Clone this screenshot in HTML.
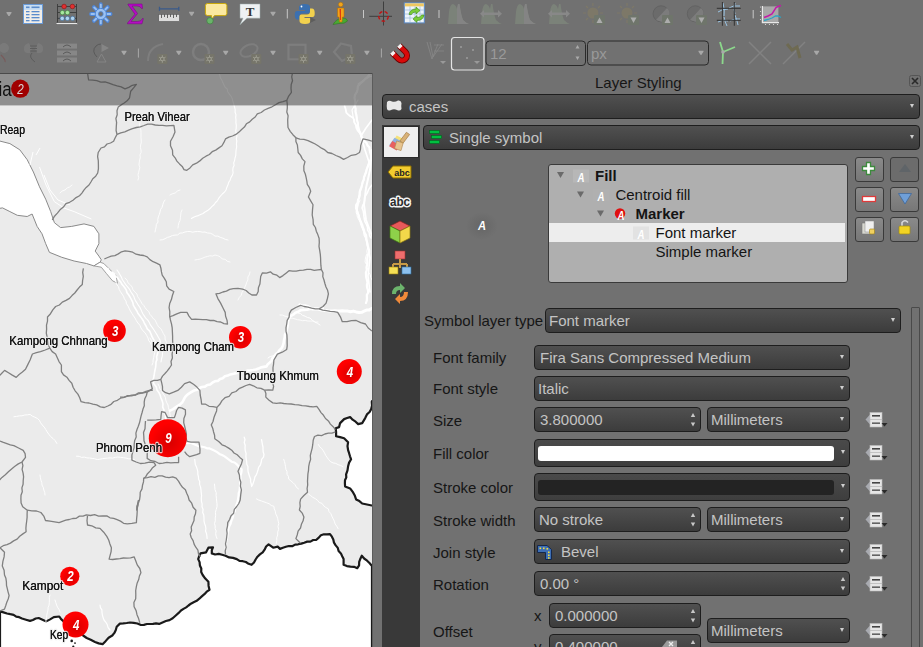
<!DOCTYPE html>
<html><head><meta charset="utf-8">
<style>
*{box-sizing:border-box;margin:0;padding:0}
html,body{width:923px;height:647px;overflow:hidden;background:#717171;font-family:"Liberation Sans",sans-serif;font-size:15px;}
.abs{position:absolute}
#map{position:absolute;left:0;top:73px;width:372px;height:574px;background:#e9e9e9;overflow:hidden}
#band{position:absolute;left:0;top:0;width:372px;height:32px;background:rgba(60,60,60,0.45)}
.dd{position:absolute;border:1px solid #1e1e1e;border-radius:4px;background:linear-gradient(#505050,#3c3c3c);color:#c4c4c4;font-size:15px;line-height:24px;padding-left:5px;white-space:nowrap;overflow:hidden}
.arr{position:absolute;right:5px;top:50%;margin-top:-3px;width:0;height:0;border-left:2.5px solid transparent;border-right:2.5px solid transparent;border-top:4.5px solid #cfcfcf}
.lbl{position:absolute;color:#161616;font-size:15px;white-space:nowrap;margin-top:-1px}
.btn{position:absolute;border:1px solid #3a3a3a;border-radius:3px;background:linear-gradient(#8a8a8a,#777)}
</style></head><body>

<!-- toolbar -->
<div id="tb" class="abs" style="left:0;top:0;width:923px;height:73px;background:#717171"><svg class="abs" style="left:0;top:0" width="923" height="73" viewBox="0 0 923 73">
<defs>
<g id="tarr"><path d="M-2.5,-2 L2.5,-2 L2.5,-1 L0.8,1.5 L0.8,2 L-0.8,2 L-0.8,1.5 L-2.5,-1 Z" fill="#a8a8a8"/></g>
<g id="badge"><rect x="-5" y="-5" width="10" height="10" rx="1" fill="#76756a"/><g stroke="#b4b4a8" stroke-width="0.6"><path d="M0,-3.8 L0,3.8 M-3.3,-1.9 L3.3,1.9 M-3.3,1.9 L3.3,-1.9"/></g><circle r="1.8" fill="#76756a" stroke="#b4b4a8" stroke-width="0.6"/></g>
</defs>
<!-- row 1 -->
<use href="#tarr" x="9" y="14"/>
<!-- table -->
<rect x="23.5" y="4.5" width="19" height="19" fill="#f2eee8" stroke="#6a9ad6" stroke-width="1"/>
<rect x="24" y="5" width="18" height="5" fill="#c8def3"/>
<g fill="#5b8ccc"><rect x="26" y="6.5" width="3.5" height="1.6"/><rect x="31.5" y="6.5" width="8" height="1.6"/>
<rect x="26" y="11" width="3.5" height="1.3"/><rect x="31.5" y="11" width="8" height="1.3"/>
<rect x="26" y="14" width="3.5" height="1.3"/><rect x="31.5" y="14" width="8" height="1.3"/>
<rect x="26" y="17" width="3.5" height="1.3"/><rect x="31.5" y="17" width="8" height="1.3"/>
<rect x="26" y="20" width="3.5" height="1.3"/><rect x="31.5" y="20" width="8" height="1.3"/></g>
<!-- abacus -->
<g stroke="#3a3a3a" stroke-width="0.9"><path d="M57.5,4 L57.5,23 M76.5,4 L76.5,23 M57.5,6.5 L76.5,6.5 M57.5,12.5 L76.5,12.5 M57.5,18.4 L76.5,18.4"/></g>
<rect x="56.5" y="22.8" width="21" height="1.6" fill="#e8e8e8" stroke="#444" stroke-width="0.4"/>
<g stroke="#8a1010" stroke-width="0.6" fill="#e03030"><circle cx="64.1" cy="6.5" r="2.3"/><circle cx="72.4" cy="6.5" r="2.3"/></g>
<g stroke="#3a8a3a" stroke-width="0.6" fill="#a8e6a0"><circle cx="62.4" cy="12.6" r="2.2"/><circle cx="67.4" cy="12.6" r="2.2"/></g>
<g stroke="#3a6a9a" stroke-width="0.6" fill="#b0d4f0"><circle cx="62.2" cy="18.4" r="2.2"/><circle cx="67.4" cy="18.4" r="2.2"/><circle cx="72.6" cy="18.4" r="2.2"/></g>
<!-- gear -->
<g stroke="#4f86d6" stroke-width="3.8" stroke-linecap="round"><path d="M100.8,4.2 L100.8,23.8 M91,14 L110.6,14 M93.9,7.1 L107.7,20.9 M93.9,20.9 L107.7,7.1"/></g>
<g stroke="#9cc2f2" stroke-width="1.9" stroke-linecap="round"><path d="M100.8,4.6 L100.8,23.4 M91.4,14 L110.2,14 M94.2,7.4 L107.4,20.6 M94.2,20.6 L107.4,7.4"/></g>
<circle cx="100.8" cy="14" r="5.6" fill="#9cc2f2" stroke="#4f86d6" stroke-width="1"/>
<circle cx="100.8" cy="14" r="2.4" fill="#717171" stroke="#4f86d6" stroke-width="0.8"/>
<!-- sigma -->
<path d="M128,4 L142,4 L142.5,8.5 L141.5,8.5 Q140.5,6 137,6 L132,6 L137.5,13.5 L131,21.5 L137.5,21.5 Q141.5,21.5 142.5,18.5 L143.3,18.5 L142,23.8 L127.5,23.8 L127.5,23 L135,14.2 L128,4.8 Z" fill="#b40cc4" stroke="#7a0080" stroke-width="0.5"/>
<!-- ruler -->
<path d="M159.5,8.8 L178.8,8.8 M159.5,6.8 L159.5,10.8 M178.8,6.8 L178.8,10.8" stroke="#3a5a8a" stroke-width="1.3"/>
<rect x="158.7" y="14.3" width="20.8" height="7.2" fill="#dcdcdc" stroke="#555" stroke-width="0.6"/>
<path d="M161.5,14.3 L161.5,18 M164.5,14.3 L164.5,17 M167.5,14.3 L167.5,18 M170.5,14.3 L170.5,17 M173.5,14.3 L173.5,18 M176.5,14.3 L176.5,17" stroke="#444" stroke-width="0.8"/>
<use href="#tarr" x="191.6" y="13.7"/>
<!-- speech bubble -->
<path d="M207.5,3.5 L224.8,3.5 Q226.9,3.5 226.9,5.6 L226.9,13.5 Q226.9,15.6 224.8,15.6 L214.5,15.6 L211,20 L211.5,15.6 L207.5,15.6 Q205.4,15.6 205.4,13.5 L205.4,5.6 Q205.4,3.5 207.5,3.5 Z" fill="#fbe9a0" stroke="#c9a80a" stroke-width="1"/>
<circle cx="210" cy="20.8" r="3.2" fill="#6ab46a" stroke="#3a7a3a" stroke-width="0.6"/>
<!-- text annotation -->
<path d="M240,4 L260,4 L260,18.2 L247,18.2 L240,24.7 L243,18.2 L240,18.2 Z" fill="#eef1f3" stroke="#9aa" stroke-width="0.5"/>
<text x="250" y="15.8" font-family="Liberation Serif" font-size="13" font-weight="bold" fill="#333" text-anchor="middle">T</text>
<use href="#tarr" x="273" y="13.7"/>
<path d="M287.3,9 L287.3,18.5" stroke="#c8c8c8" stroke-width="1"/>
<!-- python -->
<path d="M304.5,4 Q299,4 299,7.5 L299,10 L305,10 L305,11 L297,11 Q294.5,11 294.8,15.5 Q295,19.5 297.5,19.5 L299.5,19.5 L299.5,16.5 Q299.5,13.5 302.5,13.5 L308,13.5 Q310,13.5 310,11.5 L310,7 Q310,4 304.5,4 Z" fill="#3b70b0"/>
<circle cx="301.5" cy="6.5" r="0.9" fill="#fff"/>
<path d="M305,24 Q310.5,24 310.5,20.5 L310.5,18 L304.5,18 L304.5,17 L312.5,17 Q315,17 314.7,12.5 Q314.5,8.5 312,8.5 L310,8.5 L310,11.5 Q310,14.5 307,14.5 L301.5,14.5 Q299.5,14.5 299.5,16.5 L299.5,21 Q299.5,24 305,24 Z" fill="#f2d14e"/>
<path d="M310,17 L316,20 L310,23 Z" fill="#555" opacity="0.7"/>
<!-- person -->
<path d="M333,24.5 Q336,19 342,18 Q347,18 347.5,21 Q345,24 339,23.5 Z" fill="#4aa832" stroke="#2d6e1c" stroke-width="0.5"/>
<circle cx="340.7" cy="4.5" r="2.3" fill="#f2a41a" stroke="#a86a0a" stroke-width="0.5"/>
<path d="M337.5,8 L344,8 L344,17 L342.5,17 L342,22 L339.5,22 L339,17 L337.5,17 Z" fill="#f2a41a" stroke="#b06a00" stroke-width="0.5"/>
<path d="M339.5,9 L341,9 L341,20 L340,20 Z" fill="#e03a10"/>
<path d="M363.5,10 L363.5,18" stroke="#c8c8c8" stroke-width="1"/>
<!-- crosshair -->
<path d="M383.5,1.5 L383.5,25.5 M369.3,16.3 L392,16.3" stroke="#3e3e3e" stroke-width="1"/>
<circle cx="383.5" cy="16.3" r="4.8" fill="none" stroke="#c41010" stroke-width="1.4" stroke-dasharray="3.4,2.4"/>
<!-- table refresh -->
<rect x="404.3" y="2.9" width="20" height="20" fill="#eef4fa" stroke="#5a8ac8" stroke-width="1"/>
<rect x="404.8" y="3.4" width="19" height="3" fill="#f0c860"/>
<path d="M404.8,10 L423.8,10 M404.8,14 L423.8,14 M404.8,18 L423.8,18 M410,6.4 L410,22.4 M415,6.4 L415,22.4 M420,6.4 L420,22.4" stroke="#9ab8d8" stroke-width="0.7"/>
<path d="M409,14.5 Q410,9 416,9 L416,7 L420,10.5 L416,14 L416,12 Q412,12 411.5,14.5 Z" fill="#7acc3a" stroke="#3a8a10" stroke-width="0.6"/>
<path d="M424,15 Q423,20.5 417,20.5 L417,22.5 L413,19 L417,15.5 L417,17.5 Q421,17.5 421.5,15 Z" fill="#7acc3a" stroke="#3a8a10" stroke-width="0.6"/>
<path d="M439,10 L439,18" stroke="#c8c8c8" stroke-width="1"/>
<!-- histograms (disabled) -->
<g opacity="0.42">
<path d="M448,24 L449,12 Q450,4 453,4 Q456,5 457,9 L458,4 L459.5,4 Q461,15 463,20 Q466,23 469,24 Z" fill="#8a9a84"/>
<path d="M457,9 L458,4 L459.5,4 Q461,15 463,20 Q466,23 469,24 L457,24 Z" fill="#a0a0a0"/>
<path d="M481,24 L482,12 Q483,4 486,4 Q489,5 490,9 L491,4 L492.5,4 Q494,15 496,20 Q499,23 502,24 Z" fill="#8a9a84"/>
<path d="M480,13.8 L484,10 L484,12.5 L498,12.5 L498,10 L502,13.8 L498,17.5 L498,15 L484,15 L484,17.5 Z" fill="#a8a8a8"/>
<path d="M515,24 L516,12 Q517,4 520,4 Q523,5 524,9 L525,4 L526.5,4 Q528,15 530,20 Q533,23 536,24 Z" fill="#8a9a84"/>
<path d="M524,9 L525,4 L526.5,4 Q528,15 530,20 Q533,23 536,24 L524,24 Z" fill="#a0a0a0"/>
<path d="M549,24 L550,12 Q551,4 554,4 Q557,5 558,9 L559,4 L560.5,4 Q562,15 564,20 Q567,23 570,24 Z" fill="#8a9a84"/>
<path d="M548,13.8 L552,10 L552,12.5 L566,12.5 L566,10 L570,13.8 L566,17.5 L566,15 L552,15 L552,17.5 Z" fill="#a8a8a8"/>
</g>
<!-- sun / contrast disabled -->
<g opacity="0.5">
<circle cx="592.9" cy="13" r="5.5" fill="#8a8060"/>
<path d="M592.9,3 L592.9,6 M592.9,20 L592.9,23 M583,13 L586,13 M600,13 L603,13 M586,6 L588,8 M600,6 L598,8 M586,20 L588,18" stroke="#8a8060" stroke-width="1.2"/>
<rect x="594" y="15" width="11" height="10" rx="1" fill="#6e7a66"/>
<path d="M596.5,23 L599.5,17.5 L602.5,23 Z" fill="#e8e8e8"/>
<circle cx="627" cy="13" r="5.5" fill="#8a8060"/>
<path d="M627,3 L627,6 M627,20 L627,23 M617,13 L620,13 M634,13 L637,13 M620,6 L622,8 M634,6 L632,8 M620,20 L622,18" stroke="#8a8060" stroke-width="1.2"/>
<rect x="628" y="15" width="11" height="10" rx="1" fill="#6e7a66"/>
<path d="M630.5,17.5 L636.5,17.5 L633.5,23 Z" fill="#e8e8e8"/>
<circle cx="661.1" cy="13.8" r="8" fill="#666" stroke="#555" stroke-width="1"/>
<path d="M656,20 L667,8 A8,8 0 0,1 661.1,21.8 Z" fill="#888"/>
<rect x="662" y="15" width="11" height="10" rx="1" fill="#6e7a66"/>
<path d="M664.5,23 L667.5,17.5 L670.5,23 Z" fill="#e8e8e8"/>
<circle cx="695.3" cy="13.8" r="8" fill="#666" stroke="#555" stroke-width="1"/>
<path d="M690,20 L701,8 A8,8 0 0,1 695.3,21.8 Z" fill="#888"/>
<rect x="696" y="15" width="11" height="10" rx="1" fill="#6e7a66"/>
<path d="M698.5,17.5 L704.5,17.5 L701.5,23 Z" fill="#e8e8e8"/>
</g>
<!-- grid -->
<path d="M718,12 Q722,9 728,9 M729,8 Q733,5 740,6 M718,22 Q722,19 728,21 M730,21 Q735,18 740,19 M723,3 Q725,10 724,16 M724,17 Q725,22 727,26 M735,3 Q733,10 735,14 M735,15 Q737,20 738,25" stroke="#9ac4e4" stroke-width="1" fill="none"/>
<path d="M722.4,2 L722.4,25.8 M734.3,2 L734.3,25.8 M716.8,8.3 L740.8,8.3 M716.8,20.3 L740.8,20.3" stroke="#333" stroke-width="1"/>
<path d="M753.2,10 L753.2,18.4" stroke="#c8c8c8" stroke-width="1"/>
<!-- chart -->
<rect x="762.4" y="6.4" width="16" height="16.2" fill="#a8a8a8"/>
<path d="M762.4,6 L762.4,22.6 L779,22.6" stroke="#e8e8e8" stroke-width="1.2" fill="none"/>
<g fill="#ddd"><circle cx="760.5" cy="7" r="0.6"/><circle cx="760.5" cy="11.5" r="0.6"/><circle cx="760.5" cy="15.5" r="0.6"/><circle cx="760.5" cy="19.5" r="0.6"/><circle cx="765.5" cy="24.5" r="0.6"/><circle cx="769.5" cy="24.5" r="0.6"/><circle cx="773.5" cy="24.5" r="0.6"/><circle cx="777.5" cy="24.5" r="0.6"/></g>
<path d="M764,17.5 L768,16 L772,14 L776,7.5 L778,6.5 L781,5.5" stroke="#c21aa8" stroke-width="1.5" fill="none"/>
<path d="M764,20.5 L768,19.5 L772,18 L775.5,16 L778,16 L781,17.5" stroke="#2aa4c4" stroke-width="1.3" fill="none"/>

<!-- row 2 (mostly disabled) -->
<g opacity="0.9">
<circle cx="4" cy="48" r="5" fill="#7c7c7c"/>
<path d="M1,55 Q6,60 5,62" stroke="#7a5a5a" stroke-width="1.2" fill="none"/>
<path d="M29,43 Q23,44 24,50 Q25,54 30,53 L32,49 Z" fill="#7b7b7b"/><path d="M38,43 Q44,44 43,50 Q42,54 37,53 L35,49 Z" fill="#7b7b7b"/>
<path d="M30,46 L37,46 M30,48.5 L37,48.5 M30,51 L37,51" stroke="#555" stroke-width="0.8"/>
<path d="M32,53 Q28,57 35,62" stroke="#555" stroke-width="0.8" fill="none"/>
<g fill="#8a8a8a"><rect x="57" y="43.6" width="20" height="5"/><rect x="57" y="50.5" width="20" height="5"/><rect x="57" y="57.5" width="20" height="5"/></g>
<path d="M63,47 Q67,43 71,47 M63,54 Q67,50 71,54 M63,61 Q67,57 71,61" stroke="#444" stroke-width="0.7" fill="none"/>
<path d="M97,57 Q91,51 96,46 Q98,44 101,44" stroke="#555" stroke-width="0.9" fill="none"/>
<path d="M101.5,44 L109,48 L101.5,52 Z" fill="#888"/>
<path d="M97,62 L101.5,54 L106,62 Z" fill="none" stroke="#888" stroke-width="1"/>
</g>
<use href="#tarr" x="124" y="52.7"/>
<path d="M138.4,48.5 L138.4,57.6" stroke="#a8a8a8" stroke-width="1"/>
<path d="M148,61 Q148,47 163,44" stroke="#7e7e7e" stroke-width="2" fill="none"/>
<use href="#badge" x="162.3" y="59"/>
<use href="#tarr" x="178.8" y="52.7"/>
<circle cx="201" cy="52" r="8" fill="none" stroke="#7e7e7e" stroke-width="2.5"/>
<use href="#badge" x="209.5" y="59"/>
<use href="#tarr" x="225.7" y="52.7"/>
<ellipse cx="249" cy="50.5" rx="9" ry="5.5" fill="none" stroke="#7e7e7e" stroke-width="2" transform="rotate(-25 249 50.5)"/>
<use href="#badge" x="256.3" y="59"/>
<use href="#tarr" x="273" y="52.7"/>
<rect x="288.5" y="44.8" width="17" height="14.5" fill="none" stroke="#7e7e7e" stroke-width="2.2"/>
<use href="#badge" x="303.5" y="59"/>
<use href="#tarr" x="319.7" y="52.7"/>
<path d="M341,43.5 L351,46 L352,56 L342,61 L334,52 Z" fill="none" stroke="#7e7e7e" stroke-width="2.2"/>
<use href="#badge" x="350.3" y="59"/>
<use href="#tarr" x="366.9" y="52.7"/>
<path d="M381.4,48.5 L381.4,57.5" stroke="#a8a8a8" stroke-width="1"/>
<!-- magnet -->
<g transform="translate(402,55.5) rotate(-45)">
<path d="M-5,-9 L-5,0 A5,5 0 0,0 5,0 L5,-9" fill="none" stroke="#6a0000" stroke-width="6"/>
<path d="M-5,-8.5 L-5,0 A5,5 0 0,0 5,0 L5,-8.5" fill="none" stroke="#d80a0a" stroke-width="4.4"/>
<rect x="-7.2" y="-9.5" width="4.4" height="3.2" fill="#f2f2f2"/>
<rect x="2.8" y="-9.5" width="4.4" height="3.2" fill="#f2f2f2"/>
</g>
<!-- V icon disabled -->
<g stroke="#888" stroke-width="1" fill="none" opacity="0.8"><path d="M427,42 L432,59 L438,44 M430,42 L433,57 L442,44 M434,45 L444,45 M434,51 L444,51"/></g>
<path d="M440,61 L446,61 L443,64 Z" fill="#999"/>
<!-- selected button -->
<rect x="451.5" y="37.5" width="32.5" height="32.5" rx="3" fill="#717171" stroke="#e4e4e4" stroke-width="1.2"/>
<g stroke="#999" stroke-width="0.8"><path d="M460,46 L462,48 M462,46 L460,48 M472,49 L474,51 M474,49 L472,51 M466,57 L468,59 M468,57 L466,59"/></g>
<path d="M474,61 L480,61 L477,64 Z" fill="#999"/>
<!-- spinbox 12 -->
<rect x="486" y="41" width="99.5" height="24.5" rx="3.5" fill="#717171" stroke="#2a2a2a" stroke-width="1"/>
<text x="490" y="59" font-family="Liberation Sans" font-size="15" fill="#9a9a9a">12</text>
<path d="M575.5,48.5 L579.5,48.5 L577.5,45 Z M575.5,56.5 L579.5,56.5 L577.5,60 Z" fill="#aaa"/>
<!-- px combo -->
<rect x="587.5" y="41" width="121" height="24" rx="3.5" fill="#717171" stroke="#2a2a2a" stroke-width="1"/>
<text x="591" y="59" font-family="Liberation Sans" font-size="15" fill="#999">px</text>
<use href="#tarr" x="701" y="52.7"/>
<!-- Y green -->
<path d="M723,52 L720,42 M723,52 L735,47 M723,52 L722.5,64" stroke="#8cd88c" stroke-width="1.8"/>
<circle cx="723" cy="52" r="1.8" fill="#aaa"/>
<path d="M749,42 L771,64 M771,42 L749,64" stroke="#828282" stroke-width="1.5"/>
<path d="M783,64 L805,42" stroke="#828282" stroke-width="1.5"/>
<path d="M787,44 L792,50 L797,47 L800,58" stroke="#6e6a52" stroke-width="3" fill="none"/>
<use href="#tarr" x="816.6" y="52.7"/>
</svg>
</div>

<!-- map -->
<div id="map"><svg width="372" height="574" viewBox="0 73 372 574" style="position:absolute;left:0;top:0;display:block;will-change:transform">
<defs>
<radialGradient id="sh" cx="0.55" cy="0.6" r="0.5"><stop offset="0" stop-color="#900000" stop-opacity="0.35"/><stop offset="1" stop-color="#900000" stop-opacity="0"/></radialGradient>
</defs>
<rect x="0" y="73" width="372" height="574" fill="#ebebeb"/>
<!-- Vietnam white -->
<path d="M372.0,401.0 L371.8,402.0 L372.1,405.6 L371.2,409.1 L369.6,412.0 L367.2,414.1 L365.2,418.1 L362.2,423.1 L358.2,424.1 L355.6,421.7 L352.6,419.7 L350.1,417.1 L347.1,418.0 L344.1,419.1 L340.1,423.1 L339.1,427.1 L335.7,428.2 L336.1,432.2 L336.1,436.2 L340.1,437.1 L344.1,438.2 L348.1,442.2 L347.5,446.2 L348.1,450.2 L349.1,453.2 L350.0,456.3 L351.1,459.3 L349.1,462.6 L348.1,466.3 L347.5,470.4 L346.1,474.3 L346.3,477.4 L345.0,480.3 L344.9,483.3 L345.1,486.4 L350.1,488.4 L353.1,492.4 L354.9,495.8 L356.1,499.4 L359.4,501.1 L362.2,503.5 L371.8,505.5 L374.0,505.5 L374.0,401.0 Z" fill="#ffffff" stroke="#1a1a1a" stroke-width="2.2" stroke-linejoin="round"/>
<!-- sea -->
<path d="M0.0,611.4 L3.5,612.4 L7.0,613.5 L10.3,614.2 L13.6,614.8 L16.2,616.6 L19.2,617.2 L22.0,618.5 L26.0,619.7 L30.0,620.9 L32.9,620.0 L35.7,618.5 L38.7,618.0 L42.5,619.7 L46.3,621.4 L50.1,619.4 L53.8,617.1 L59.3,616.5 L61.1,619.2 L63.6,621.4 L67.1,623.2 L70.0,626.0 L73.7,628.3 L77.0,631.0 L80.4,632.8 L83.1,635.5 L86.7,638.0 L90.7,639.8 L95.0,642.0 L98.7,643.4 L102.6,644.2 L105.8,640.9 L108.6,637.7 L112.3,635.5 L114.4,632.9 L115.8,630.0 L116.7,626.8 L119.9,623.6 L123.3,623.4 L126.7,623.0 L130.0,622.5 L133.7,622.9 L137.4,623.5 L140.9,625.0 L143.9,624.9 L146.9,624.0 L150.0,624.0 L153.0,623.9 L156.0,623.4 L159.1,623.9 L162.5,622.4 L165.9,621.0 L169.5,620.1 L172.7,618.2 L175.5,615.7 L178.4,613.2 L181.0,610.5 L183.5,608.9 L186.2,607.4 L188.5,605.5 L190.9,603.7 L193.6,602.3 L196.7,600.8 L199.3,598.7 L201.8,596.4 L204.4,594.2 L206.7,591.7 L209.5,589.8 L208.6,585.9 L208.4,581.8 L205.3,578.6 L202.7,575.0 L201.2,572.0 L201.3,568.5 L199.9,565.5 L199.6,562.1 L198.2,559.1 L199.2,556.2 L200.5,553.4 L206.1,552.3 L208.4,547.7 L213.0,547.3 L211.8,550.2 L211.8,553.4 L215.1,554.5 L218.8,553.9 L222.1,554.7 L225.5,555.7 L229.1,557.4 L233.0,557.9 L236.8,559.1 L239.5,560.9 L242.8,561.2 L245.9,562.0 L248.6,563.8 L251.6,564.8 L254.0,562.5 L255.6,559.5 L257.5,556.7 L259.9,554.4 L262.7,552.4 L264.6,549.7 L266.1,546.5 L268.6,544.3 L273.2,547.7 L277.7,546.6 L280.0,548.9 L282.9,547.8 L285.9,546.8 L288.9,546.0 L292.2,546.2 L295.1,544.6 L298.2,544.3 L301.3,543.6 L304.2,542.7 L307.2,541.6 L310.4,541.6 L313.2,540.0 L316.4,539.8 L318.8,537.6 L320.9,535.2 L323.9,534.3 L327.0,534.4 L330.0,534.1 L331.9,536.7 L333.3,539.5 L334.0,542.7 L335.7,545.4 L337.8,547.9 L338.6,551.0 L340.9,553.4 L342.2,556.3 L343.6,559.1 L343.6,564.8 L346.9,566.1 L350.4,566.7 L354.0,566.8 L357.3,568.2 L359.1,565.3 L359.2,561.8 L360.4,558.7 L361.8,555.7 L364.1,558.5 L367.1,560.7 L369.7,563.2 L372.0,566.0 L372.0,660.0 L0.0,660.0 Z" fill="#ffffff" stroke="#1a1a1a" stroke-width="2.2" stroke-linejoin="round"/>
<circle cx="71.7" cy="640.9" r="1.3" fill="#1a1a1a"/><circle cx="75" cy="643.1" r="0.9" fill="#1a1a1a"/><circle cx="73.3" cy="646.5" r="1.1" fill="#1a1a1a"/>
<!-- lake -->
<path d="M-2,141 L0,141.1 L9.9,143.6 L19.8,149.8 L27.2,159.7 L33.4,172 L39.5,186.8 L45.7,199.2 L50.7,211.6 L54.4,222.7 L60.6,227.6 L71.7,226.4 L84,223.9 L93.9,226.4 L98.9,233.8 L98.9,243.7 L95.2,251.1 L98.9,256.1 L101.3,259.8 L100.1,262.2 L93.9,265.9 L86.5,263.5 L74.1,261 L61.8,257.3 L49.4,252.3 L45.7,243.7 L42,233.8 L37.1,226.4 L32.1,214 L27.2,216.5 L17.3,215.3 L9.9,211.6 L2.5,207.9 L-2,208.6 Z" fill="#ffffff" stroke="#8a8a8a" stroke-width="1"/>
<path d="M100.1,262.2 L103.8,263.5 L108.7,268.4 L116.2,275.8 L117.4,283.2 L112.5,280.8 L106.3,273.4 L101.3,267.2 L93.9,265.9 Z" fill="#fff" stroke="#8a8a8a" stroke-width="0.8"/>
<g fill="none" stroke="#fff" stroke-width="1"><path d="M39.5,167 L46,185 L54.4,201.7 L64,208 L74.1,211.6 L91.4,219"/><path d="M44,175 L50,190 L58,200 L70,205"/><path d="M36,155 L40,148 M30,165 L33,152"/></g>
<!-- white rivers -->
<g fill="none" stroke="#ffffff" stroke-linecap="round" stroke-linejoin="round">
<path d="M369.4,74.7 L367.7,76.8 L365.5,78.5 L363.8,80.6 L361.6,82.3 L359.7,84.2 L357.9,86.2 L357.6,89.2 L356.8,92.2 L355.0,94.8 L354.5,97.8 L355.1,100.5 L355.4,103.3 L354.8,106.1 L355.7,108.8 L355.5,111.6 L356.2,114.3 L356.7,117.2 L356.9,120.1 L357.9,122.9 L357.9,125.9 L358.7,128.6 L359.4,131.3 L360.8,133.8 L361.5,136.6 L362.8,139.1 L364.3,141.3 L366.5,142.9 L367.5,145.5 L369.4,147.4 L369.7,150.3 L370.4,153.2 L371.2,156.0 L371.0,159.0 L369.6,161.5 L369.1,164.3 L367.8,166.8 L366.7,169.4 L366.1,172.2 L365.0,174.7 L364.0,177.2 L363.8,179.9 L362.5,182.3 L362.0,185.0 L361.4,187.5 L360.2,189.9 L359.6,192.4 L359.8,195.1 L359.1,197.6 L358.0,200.0 L357.7,202.7 L356.1,205.2 L356.0,208.0 L356.9,210.4 L357.5,212.8 L358.6,215.1 L359.2,217.6 L360.0,220.0 L361.1,222.4 L362.2,224.9 L362.9,227.5 L363.9,230.0 L364.5,232.7 L366.0,235.0 L366.3,237.5 L366.5,240.1 L367.1,242.6 L367.4,245.1 L368.3,247.5 L369.0,250.0 L369.1,252.6 L367.9,254.9 L367.4,257.4 L367.2,259.9 L367.3,262.5 L367.0,265.0 L366.5,267.5 L366.8,270.0 L365.9,272.5 L366.0,275.0 L366.2,277.5 L366.9,280.0 L367.5,282.4 L366.9,285.1 L367.1,287.6 L368.0,290.0 L368.1,292.7 L366.8,295.1 L366.9,297.8 L366.8,300.5 L366.0,303.0" stroke-width="2.2"/>
<path d="M344.6,106.0 L345.7,109.3 L346.3,112.7 L348.3,114.6 L350.4,116.3 L352.9,117.6 L354.2,119.9 L354.4,122.6 L355.9,124.9 L356.2,127.5 L357.6,130.4 L359.7,132.9 L361.2,135.8" stroke-width="1.8"/>
<path d="M372.0,185.0 L370.1,187.3 L368.5,189.7 L367.5,192.5 L366.0,195.0 L364.6,197.4 L364.6,200.3 L364.1,202.9 L362.7,205.4 L362.0,208.0 L363.1,210.7 L363.6,213.5 L363.9,216.4 L364.3,219.2 L365.0,222.0 L366.4,224.5 L367.5,227.1 L367.6,230.2 L369.2,232.6 L369.5,235.5 L371.0,238.0" stroke-width="1.5"/>
<path d="M372.0,76.0 L369.1,76.9 L366.7,78.8 L364.0,80.0 L361.0,82.0 L358.0,84.0" stroke-width="1.2"/>
<path d="M360.0,200.0 L359.2,202.4 L358.2,204.7 L357.5,207.2 L356.7,209.6 L356.0,212.0 L356.9,214.7 L357.5,217.5 L359.0,220.0 L360.1,222.6 L360.8,225.4 L362.0,228.0 L363.2,230.3 L363.9,232.8 L364.0,235.5 L365.4,237.7 L366.2,240.2 L367.7,242.4 L368.0,245.0 L367.6,247.9 L366.9,250.6 L367.1,253.6 L365.9,256.3 L365.3,259.1 L365.0,262.0 L366.5,264.4 L366.9,267.2 L368.0,269.7 L368.8,272.4 L370.2,274.8 L370.8,277.5 L372.0,280.0" stroke-width="1"/>
<path d="M299.8,304.9 L302.3,305.9 L305.0,305.7 L307.5,306.4 L309.9,307.8 L312.3,308.9 L315.0,309.0 L317.9,309.1 L320.8,309.8 L323.7,310.4 L326.6,310.5 L329.5,311.1 L332.1,310.9 L334.7,310.8 L337.2,310.9 L339.8,311.1 L342.4,310.8 L345.0,311.0 L347.8,311.1 L350.5,311.8 L353.4,311.1 L356.1,311.9 L358.9,312.4 L361.7,312.3 L364.1,311.2 L366.5,310.1 L369.3,309.9 L371.6,308.6" stroke-width="3"/>
<path d="M322.8,308.1 L320.3,308.6 L317.7,308.8 L315.1,308.7 L312.5,308.6 L310.0,309.0 L307.0,309.8 L303.8,309.9 L300.7,310.1 L298.3,311.8 L295.4,312.8 L293.2,314.7 L290.6,316.1 L288.9,318.9 L288.0,322.0 L287.9,324.8 L287.3,327.5 L286.6,330.2 L285.8,332.6 L284.9,335.0 L284.7,337.6 L284.0,340.0 L283.6,343.2 L282.6,346.3 L281.3,348.6 L279.3,350.3 L278.0,352.5 L275.8,354.1 L274.5,356.3 L272.6,358.1 L271.6,360.6 L269.9,362.5 L267.8,364.2 L266.5,366.4 L263.8,366.9 L261.0,367.4 L258.5,368.6 L255.9,369.5 L253.1,370.0 L250.4,370.4 L247.7,370.5 L245.2,371.5 L242.6,371.8 L240.0,372.0 L236.8,372.9 L233.6,373.7 L230.3,374.4 L227.8,375.6 L224.9,376.2 L222.7,378.2 L220.0,379.0 L217.8,380.9 L214.8,381.3 L212.4,382.7 L210.2,384.5 L207.3,385.0 L204.9,386.6 L202.0,387.0 L199.3,388.0 L196.9,389.8 L194.1,390.5 L191.2,392.1 L188.5,393.8 L186.0,396.0 L184.5,398.1 L183.4,400.4 L182.1,402.6 L180.2,404.3 L178.1,405.7 L176.0,407.0 L173.2,409.1 L170.0,410.6" stroke-width="2.6"/>
<path d="M280.0,352.0 L277.8,353.7 L275.2,354.3 L272.9,355.8 L270.2,356.5 L268.0,358.0 M298.0,313.0 L300.6,313.5 L302.6,315.4 L305.1,316.2 L307.4,317.5 L310.0,318.0 L312.2,320.1 L314.7,321.9 L317.4,323.3 L320.0,325.0" stroke-width="1"/>
<path d="M112.0,272.0 L114.2,273.6 L115.3,276.2 L117.5,277.7 L119.0,280.0 L120.7,281.9 L121.8,284.1 L123.5,286.0 L125.0,288.0 L126.3,290.2 L127.0,292.8 L128.6,294.8 L130.0,297.0 L131.4,299.7 L132.8,302.4 L133.4,305.4 L135.0,308.0 L136.7,310.7 L138.0,313.5 L140.0,316.0 L141.7,318.4 L143.3,320.8 L144.5,323.5 L146.0,326.0 L147.3,328.9 L149.7,331.1 L151.0,334.0 L151.9,336.4 L153.1,338.7 L154.4,340.9 L156.0,343.0 L156.3,346.1 L157.9,348.9 L158.0,352.0 L157.3,354.5 L156.6,356.9 L157.0,359.6 L156.0,362.0 L155.9,364.7 L155.6,367.4 L155.0,370.0 L154.5,372.7 L154.1,375.5 L153.5,378.3 L153.0,381.0 L154.0,384.1 L156.2,386.8 L157.0,390.0 L158.8,392.4 L160.1,395.1 L161.0,398.0 L162.2,400.9 L163.0,403.9 L162.7,407.1 L164.0,410.0 L164.1,412.6 L165.5,414.9 L165.5,417.5 L166.0,420.0" stroke-width="1.6"/>
<path d="M117.0,270.0 L118.6,272.3 L120.0,274.7 L121.4,277.1 L122.4,279.7 L124.0,282.0 L125.7,284.6 L127.6,286.9 L129.6,289.3 L131.0,292.0 L132.4,294.1 L133.8,296.2 L134.5,298.6 L135.6,300.9 L137.0,303.0 L138.3,305.1 L139.8,307.2 L140.9,309.4 L141.9,311.7 L143.0,314.0 L144.4,316.1 L145.7,318.2 L147.6,319.9 L149.0,322.0 L150.4,324.9 L152.2,327.4 L154.0,330.0 L155.6,332.5 L157.1,334.9 L158.5,337.5 L160.0,340.0 L160.5,342.6 L161.6,345.0 L162.0,347.6 L163.0,350.0 L162.5,353.0 L162.3,356.1 L161.5,359.0 L161.0,362.0" stroke-width="1.1"/>
<path d="M108.0,268.0 L109.1,270.4 L111.1,272.4 L112.1,275.0 L113.4,277.3 L114.3,279.9 L116.0,282.0 L116.7,284.6 L118.5,286.7 L119.2,289.4 L120.5,291.8 L122.0,294.0 L123.5,296.3 L124.4,298.8 L126.0,301.0 L126.5,303.8 L128.0,306.0 L129.2,308.5 L130.4,311.0 L131.9,313.4 L133.4,315.7 L135.0,318.0 L136.3,320.6 L137.9,323.0 L139.9,325.3 L141.0,328.0 L142.7,330.6 L145.0,332.7 L146.6,335.3 L148.0,338.0 L148.7,340.6 L150.5,342.8 L151.5,345.3 L152.0,348.0" stroke-width="0.9"/>
<path d="M125.0,278.0 L127.1,280.1 L128.0,282.9 L130.3,284.8 L132.1,287.0 L133.0,289.9 L135.0,292.0 L136.9,294.0 L137.7,296.7 L139.3,298.9 L140.7,301.2 L142.0,303.6 L143.9,305.6 L145.2,307.9 L147.0,310.0 L148.9,311.7 L149.7,314.2 L151.5,316.0 L152.8,318.2 L154.9,319.7 L156.0,322.0 L157.2,324.5 L158.6,326.9 L160.9,328.7 L162.2,331.2 L163.4,333.7 L165.0,336.0 L165.1,339.1 L166.3,341.9 L166.9,344.9 L167.0,348.0" stroke-width="0.8"/>
<path d="M150.0,338.0 L151.3,340.3 L151.9,342.9 L152.7,345.3 L154.1,347.6 L155.0,350.0 L154.7,352.5 L154.1,355.0 L153.7,357.5 L153.1,360.0 L153.0,362.6 L152.0,365.0 M158.0,384.0 L159.2,386.2 L159.9,388.7 L161.7,390.5 L162.5,392.9 L164.0,395.0 L165.4,397.3 L165.8,400.1 L166.7,402.6 L168.0,405.0 L168.4,407.6 L169.2,410.2 L169.8,412.8 L170.2,415.4 L171.0,418.0" stroke-width="0.9"/>



<path d="M184.8,442.0 L187.2,443.1 L189.9,442.8 L192.3,443.4 L194.7,444.5 L197.1,445.5 L199.5,446.4 L202.1,446.7 L204.6,447.3 L207.0,448.3 L209.6,448.4 L212.0,449.5 L214.6,450.7 L217.1,452.1 L219.4,453.9 L222.0,455.0 L224.6,456.4 L226.9,458.1 L229.3,459.8 L231.6,461.7 L234.5,462.5 L236.8,464.3 L239.1,466.9 L241.7,469.2 L241.4,472.5 L240.5,475.7 L240.5,479.1 L240.0,481.9 L240.1,484.8 L239.8,487.6 L239.6,490.5 L238.7,493.2 L238.5,496.1 L238.0,498.9 L237.7,501.5 L236.8,503.9 L236.1,506.4 L234.9,508.7 L234.9,511.4 L233.2,513.6 L233.1,516.2 L232.3,518.7 L231.3,521.1 L230.6,523.7 L229.4,526.0 L228.6,528.5 L228.1,531.1 L227.6,534.0 L227.3,536.9 L226.6,539.7 L226.0,542.6 L226.1,545.5 L225.6,548.4" stroke-width="2.2"/>
<path d="M194.7,459.3 L195.0,461.8 L195.3,464.4 L196.4,466.7 L197.2,469.1 L197.8,471.6 L197.8,474.2 L198.4,476.7 L198.6,479.2 L199.7,481.6 L199.6,484.4 L200.6,487.1 L201.0,489.9 L201.2,492.7 L201.6,495.5 L201.3,498.4 L201.4,501.2 L202.1,503.9 L202.0,506.8 L203.1,509.5 L202.7,512.4 L203.8,515.1 L204.0,518.0 L204.0,520.8 L204.6,523.6 L205.5,526.0 L205.9,528.5 L205.5,531.1 L206.5,533.5 L206.9,536.0 L207.1,538.5" stroke-width="1.2"/>
<path d="M214.5,484.1 L214.8,486.9 L215.0,489.8 L216.2,492.5 L216.1,495.4 L216.4,498.2 L216.7,501.1 L217.0,503.9 L217.0,506.8 L216.2,509.5 L215.4,512.3 L215.7,515.2 L215.2,518.0 L215.3,520.8 L214.5,523.6 L215.2,526.0 L215.1,528.6 L216.2,531.0 L215.7,533.6 L216.1,536.1 L217.0,538.5" stroke-width="1"/>
<path d="M244.2,437.1 L245.0,439.8 L244.2,442.6 L245.2,445.3 L245.0,448.1 L245.3,450.9 L246.1,453.5 L245.9,456.3 L246.2,459.1 L246.7,461.8 L246.8,464.3 L248.0,466.7 L247.9,469.3 L248.1,471.8 L248.9,474.2 L249.6,476.6 L250.6,479.0 L250.6,481.6 L251.3,484.0 L251.6,486.5 L252.8,484.2 L253.6,481.9 L254.4,479.5 L254.9,476.9 L256.3,474.8 L257.2,472.4 L258.0,470.0 L258.6,467.3 L260.4,465.0 L261.2,462.3 L261.6,459.4 L263.5,457.2 L264.0,454.4 L263.2,452.0 L263.0,449.5 L263.0,447.0 L262.4,444.5 L262.0,442.1 L261.5,439.6" stroke-width="1.3"/>
<path d="M256.5,498.9 L258.9,500.1 L261.5,501.0 L264.0,501.9 L266.6,502.8 L269.1,503.7 L271.3,505.5 L273.9,506.3 L274.3,508.9 L275.3,511.3 L275.7,513.8 L276.9,516.1 L277.7,518.6 L278.2,521.1 L278.8,523.6 L278.0,526.4 L278.6,529.3 L277.7,532.1 L277.7,535.0 L276.7,537.7 L276.8,540.6 L276.3,543.4" stroke-width="0.9"/>
<path d="M283.7,459.3 L284.5,461.7 L285.1,464.2 L285.5,466.7 L285.9,469.3 L287.0,471.6 L287.0,474.3 L288.5,476.5 L288.7,479.1 L290.9,480.9 L293.0,482.7 L295.0,484.7 L296.4,487.3 L298.6,489.0" stroke-width="0.9"/>
<path d="M318.4,444.5 L319.7,446.8 L321.8,448.6 L323.3,450.8 L324.6,453.1 L325.8,455.5 L327.3,457.7 L328.9,459.8 L330.7,461.8 L333.1,462.9 L335.8,463.4 L338.2,464.7 L340.8,465.5 L343.1,466.8" stroke-width="0.9"/>
<path d="M308.5,494.0 L310.7,495.7 L312.9,497.4 L315.3,498.6 L317.5,500.3 L319.3,502.5 L322.0,503.4 L323.7,505.8 L325.8,507.5 L328.3,508.8 L329.0,511.5 L330.9,513.7 L331.9,516.3 L333.1,518.7 L334.3,521.2 L335.1,523.9 L336.7,526.2 L338.1,528.6" stroke-width="0.9"/>
<path d="M218.6,73.0 L219.9,75.3 L220.4,78.0 L221.9,80.2 L222.8,82.6 L224.0,85.0 L225.1,87.3 L227.2,89.0 L227.7,91.7 L229.2,93.8 L230.7,95.8 L232.0,98.0 L232.8,101.0 L233.7,104.0 L234.5,107.0 L235.2,109.6 L235.1,112.2 L236.0,114.7 L235.7,117.4 L236.0,120.0 L235.9,122.7 L236.3,125.3 L236.2,128.0 L235.8,130.6 L236.0,133.3 L237.0,135.9 L236.3,138.6 L236.8,141.2 L236.4,144.0 L236.7,146.9 L236.1,149.6 L235.9,152.4 L235.8,155.3 L235.0,158.0 L234.6,160.5 L233.7,162.9 L234.1,165.4 L233.0,167.8 L232.8,170.3 L233.1,172.9 L232.3,175.3 L230.9,177.6 L230.1,180.2 L228.7,182.4 L227.9,185.0 L226.8,187.4 L226.0,190.0 L224.4,192.2 L222.3,194.0 L220.5,196.0 L218.8,198.2 L217.5,200.6 L215.5,202.5 L214.0,204.8 L211.8,206.6 L209.8,208.8 L207.6,210.6 L205.0,212.0 L203.0,213.5 L200.6,214.5 L198.4,215.6 L195.9,216.3 L193.6,217.2 L191.4,218.5" stroke-width="1.1"/>
<path d="M13.9,416.8 L16.6,416.4 L19.3,415.9 L22.0,415.8 L24.7,415.0 L27.4,414.8 L30.1,414.4 L32.3,416.1 L34.8,417.2 L37.3,418.4 L39.4,420.2 L40.6,422.8 L42.3,425.0 L44.2,427.1 L45.7,429.4 L47.1,431.8 L48.7,434.1 L50.6,436.5 L53.0,438.5 L55.2,440.7 L56.8,443.4" stroke-width="1"/>
<path d="M76.5,456.2 L79.2,456.3 L81.6,457.4 L84.4,457.1 L86.9,457.9 L89.6,458.0 L92.2,458.4 L94.8,458.8 L97.3,459.6 L99.9,459.2 L102.4,458.7 L105.0,458.3 L107.6,458.1 L110.1,457.9 L112.8,458.1 L115.3,457.3 L117.9,457.0 L120.5,457.3 L123.3,457.7 L126.1,458.1 L128.8,458.9 L131.7,458.6 L134.4,459.6" stroke-width="1"/>
<path d="M155.0,232.0 L155.5,229.5 L156.1,227.0 L156.3,224.4 L158.0,222.1 L157.8,219.4 L158.3,216.9 L159.3,214.5 L160.0,212.0 L160.6,209.4 L162.1,207.3 L162.8,204.7 L163.6,202.2 L165.0,200.0" stroke-width="0.9"/>
<path d="M60.0,193.0 L62.1,191.0 L65.0,190.0 L67.1,188.0 L69.8,186.9 L72.0,185.0 M170.0,195.0 L172.5,193.7 L175.2,193.0 L177.4,191.0 L180.0,190.0 M178.0,228.0 L178.3,225.4 L178.9,222.8 L180.1,220.4 L180.4,217.7 L180.7,215.1 L181.0,212.5 L182.0,210.0 M140.0,120.0 L139.9,122.5 L139.6,125.0 L140.1,127.5 L140.9,130.0 L141.0,132.5 L141.0,135.0 L141.0,137.5 L141.2,140.0 L141.3,142.5 L140.6,145.0 L140.4,147.5 L141.0,150.0 L141.1,152.5 L139.9,154.9 L140.3,157.5 L139.6,160.0 L139.3,162.5 L139.0,164.9 L139.8,167.6 L139.2,170.0 L138.6,172.5 L138.0,174.9 L138.7,177.5 L138.0,180.0" stroke-width="0.8"/>
<path d="M250.0,272.0 L249.4,274.6 L247.9,277.0 L247.9,279.9 L246.7,282.3 L245.9,284.9 L244.7,287.4 L244.0,290.0 L242.1,292.2 L241.3,295.2 L239.3,297.4 L238.0,300.0" stroke-width="0.8"/>
<path d="M40.0,475.0 L40.4,477.6 L40.9,480.1 L41.8,482.5 L42.0,485.1 L43.3,487.5 L43.8,490.0 L44.7,492.4 L45.0,495.0 M50.0,595.0 L49.3,597.5 L49.4,600.0 L49.3,602.5 L49.1,605.1 L48.1,607.5 L48.0,610.0 L47.4,612.5 L46.8,615.0 L46.6,617.5 L46.0,620.0 L45.9,622.6 L45.0,625.0" stroke-width="0.9"/>
<path d="M100.0,605.0 L100.4,607.6 L101.9,609.9 L102.0,612.5 L102.4,615.1 L103.1,617.6 L104.0,620.0 L105.9,622.3 L107.3,624.8 L108.1,627.7 L110.0,630.0" stroke-width="1.2"/>
<path d="M55.0,600.0 L55.8,602.5 L56.6,605.0 L57.6,607.4 L59.1,609.6 L60.0,612.0" stroke-width="0.9"/>
<path d="M160.0,240.0 L162.6,239.7 L165.1,238.7 L167.4,237.4 L170.0,236.7 L172.3,235.5 L175.0,235.1 L177.7,234.9 L179.9,233.1 L182.5,232.9 L185.0,232.0 L187.5,231.5 L190.0,231.5 L192.5,232.2 L195.0,231.7 L197.5,231.5 L200.0,231.6 L202.5,232.2 L205.0,232.0 L207.5,233.0 L210.3,233.2 L212.8,234.4 L215.0,236.1 L217.9,236.1 L220.3,237.4 L222.9,238.1 L225.3,239.4 L228.0,240.0" stroke-width="0.9"/>
<path d="M195.0,260.0 L197.5,259.5 L200.1,259.1 L202.5,258.2 L204.9,257.1 L207.4,256.5 L209.9,255.8 L212.6,256.0 L215.0,255.0 L217.7,255.7 L220.2,256.8 L222.3,259.0 L225.2,259.3 L227.3,261.3 L230.0,262.0" stroke-width="0.8"/>
<path d="M280.0,315.0 L282.6,315.1 L285.0,316.2 L287.6,316.6 L289.9,317.9 L292.5,318.3 L295.0,318.9 L297.4,319.7 L300.0,320.0 L302.5,320.7 L305.2,320.4 L307.7,321.0 L310.3,321.1 L312.9,321.0 L315.4,322.1 L318.0,322.0" stroke-width="0.8"/>
</g>
<g fill="none" stroke="#ffffff" stroke-linecap="round" stroke-linejoin="round">
<path d="M372,120 L366,128 L361,136 L365,150 L369,162 L364,178 L359,196 L357,210 L362,226 L367,242 L370,258 L368,276 L370,292" stroke-width="1.6"/>
<path d="M372,150 L370,170 L366,188 L364,205 L366,220 L372,236" stroke-width="2"/>
<path d="M358,100 L352,110 L354,122 L360,132" stroke-width="1.2"/>
</g>
<!-- gray boundaries -->
<g fill="none" stroke="#808080" stroke-width="1.3" stroke-linejoin="round">
<path d="M87.5,73.0 L88.6,79.8 L92.7,80.2 L96.8,80.6 L100.8,82.1 L105.0,81.9 L109.0,83.2 L113.0,84.7 L117.1,85.9 L121.2,86.9 L125.0,88.9 L128.8,87.4 L132.3,85.3 L136.4,84.4 L133.6,87.9 L130.7,91.2 L129.5,98.0 L127.1,100.8 L124.2,103.0 L121.1,104.9 L118.2,107.1 L117.0,110.8 L117.2,114.8 L115.9,118.5 L116.6,122.4 L116.3,126.5 L116.1,130.5 L117.0,134.4 L115.2,137.7 L113.6,141.2 L110.5,143.0 L107.0,144.0 L104.5,146.9 L101.0,148.0 L98.2,152.5 L97.6,156.6 L98.3,160.7 L98.4,164.8 L98.4,168.9 L97.7,173.0 L95.7,176.2 L92.8,178.7 L90.9,182.0 L89.0,185.0 L86.2,187.4 L83.9,190.1 L81.9,193.1 L79.5,195.7 L76.1,197.6 L73.0,200.3 L69.6,202.3 L65.9,203.7 L63.4,207.1 L60.0,209.8 L57.4,213.1 L54.5,216.2 L52.3,220.0"/>
<path d="M117.0,134.4 L120.8,132.8 L124.8,131.8 L128.6,130.2 L132.4,128.6 L136.4,127.5 L140.3,126.8 L144.0,125.5 L147.7,124.1 L151.5,124.1 L155.2,125.0 L159.0,125.3 L162.7,125.3 L166.4,125.9 L170.2,125.6 L173.9,125.3 L175.0,132.1 L173.0,136.8 L170.5,141.2 L170.5,145.8 L172.5,150.2 L172.7,154.8 L175.1,157.8 L176.9,161.1 L179.5,163.9 L182.2,166.4 L184.0,169.6 L186.8,170.3 L190.0,167.9 L192.7,164.9 L196.5,163.2 L199.8,160.9 L202.7,158.2 L206.0,156.2 L209.4,154.5 L212.2,151.7 L215.7,150.1 L218.9,147.9 L222.0,145.7 L223.9,142.4 L225.5,138.9 L228.8,137.1 L232.5,136.0 L235.9,134.4 L239.0,132.1 L241.6,129.5 L244.4,127.1 L246.4,123.8 L249.7,121.9 L252.2,119.3 L255.2,117.0 L257.3,113.9 L261.2,112.5 L264.4,110.0 L268.1,108.3 L272.0,106.8 L275.5,104.8 L279.0,102.6 L283.0,101.7 L286.8,100.3 L288.7,96.1 L291.4,92.3 L291.0,88.4 L291.2,84.5 L292.5,80.7 L291.7,76.8 L292.5,73.0"/>
<path d="M286.8,100.3 L287.3,104.2 L287.3,108.1 L286.8,112.0 L288.1,115.8 L287.7,119.7 L287.8,123.6 L288.0,127.5 L290.2,131.3 L292.9,134.7 L295.9,137.8 L295.9,141.6 L297.4,145.1 L297.8,148.8 L298.2,152.5 L300.6,155.4 L302.3,158.9 L305.0,161.6 L303.8,166.1 L303.9,170.7 L305.3,174.0 L306.1,177.4 L306.8,180.9 L307.3,184.4 L309.4,187.6 L310.7,191.2 L308.4,196.9 L310.7,200.8 L313.0,204.8 L312.5,209.9 L312.2,215.0 L313.1,219.6 L313.3,224.3 L315.4,227.5 L316.3,231.2 L317.8,234.6 L319.1,238.2 L319.3,242.3 L319.0,246.4 L319.7,250.4 L320.3,254.4 L320.6,258.2 L320.7,262.0 L320.9,265.7 L321.4,269.5 L323.0,272.8 L322.8,276.6 L324.0,280.0 L324.9,283.5 L326.0,287.0 L327.6,290.3 L328.4,293.8 L327.4,298.5 L326.1,303.1 L323.0,306.5 L319.1,308.9"/>
<path d="M295.9,137.8 L299.8,139.1 L304.0,139.4 L308.0,140.6 L311.8,142.3 L315.2,144.0 L318.4,146.0 L321.5,148.2 L324.9,149.9 L327.7,152.5 L332.0,153.5 L335.9,155.5 L339.9,157.1 L343.6,159.4 L347.5,157.5 L351.3,155.3 L355.7,154.7 L359.5,152.5 L360.5,149.1 L360.7,145.6 L361.8,142.2 L363.0,138.9 L367.6,139.8 L372.0,141.2"/>
<path d="M321.4,269.5 L317.8,269.8 L314.2,270.3 L310.6,269.4 L307.0,269.3 L303.4,270.2 L299.8,270.3 L296.2,271.1 L292.6,271.2 L289.0,270.7 L286.0,273.2 L283.0,275.6 L279.7,277.6 L276.9,275.2 L273.2,274.2 L270.4,271.8 L266.5,273.1 L262.3,273.0 L260.7,276.5 L260.3,280.3 L259.9,284.1 L258.4,287.7 L258.2,291.5 L256.5,295.0 L251.9,295.0 L248.8,293.0 L246.1,290.5 L242.6,289.2 L238.0,288.4 L233.3,288.7 L229.7,289.4 L226.4,291.1 L222.9,292.0 L219.5,293.3 L215.9,293.8 L217.9,298.6 L220.6,303.1 L222.9,307.8 L225.2,312.4 L225.6,316.3 L227.0,320.1 L227.5,324.0 L223.9,323.6 L220.7,322.0 L217.1,321.7 L213.7,320.4 L210.1,320.5 L206.4,319.7 L202.7,319.6 L199.0,319.3 L195.3,319.2 L191.6,319.3 L189.0,316.1 L187.0,312.4 L180.7,312.3 L176.8,313.8 L173.0,315.6 L169.1,317.0"/>
<path d="M319.1,308.9 L315.3,308.9 L311.6,308.2 L307.9,307.1 L304.2,306.5 L300.6,305.4 L295.8,307.5 L291.3,310.1 L289.5,313.4 L289.1,317.1 L287.2,320.3 L286.7,324.0 L286.0,327.6 L286.0,331.3 L286.9,334.9 L287.1,338.6 L287.1,342.2 L287.2,345.9 L286.7,349.5 L282.2,352.2 L277.4,354.1 L273.9,360.0 L273.6,363.8 L273.0,367.5 L273.0,371.3 L273.4,375.1 L273.0,378.8 L272.6,382.6 L273.6,386.4 L272.8,390.1 L268.7,389.9 L264.6,390.1"/>
<path d="M319.1,308.9 L322.7,310.2 L326.5,310.7 L330.2,311.4 L334.0,311.7 L337.7,312.4 L340.4,316.8 L342.3,321.7 L347.0,321.7 L351.5,320.6 L356.2,320.5 L360.7,322.7 L365.5,324.0 L368.2,328.0 L372.0,331.0"/>
<path d="M104.3,259.0 L107.7,257.5 L111.2,256.2 L114.9,255.6 L118.3,253.9 L121.5,251.8 L125.1,250.9 L129.0,251.3 L132.7,252.2 L136.1,254.2 L139.9,255.0 L143.7,255.5 L147.2,256.9 L149.9,259.6 L153.1,261.7 L156.5,263.1 L159.9,264.8 L160.9,268.2 L161.4,271.7 L162.2,275.2 L164.4,278.4 L166.3,281.8 L166.7,285.9 L169.1,289.1 L173.8,291.5 L172.4,295.5 L171.4,299.6 L169.7,303.5 L169.1,307.7 L169.8,311.7 L169.7,315.9 L170.4,319.9 L171.5,323.9 L172.2,327.9 L172.4,332.0 L172.6,336.0 L172.6,340.1 L172.8,343.7 L172.2,347.2 L172.5,350.8 L172.1,354.3 L172.4,357.9 L171.0,361.4 L171.5,365.0 L169.5,368.0 L167.3,370.8 L165.0,373.5 L162.5,376.1 L160.8,379.3 L157.4,380.3 L153.8,380.4 L150.6,381.9 L151.4,385.3 L152.3,388.7 L147.2,392.1 L143.3,392.8 L139.4,393.5 L135.7,395.0 L131.7,395.1 L127.9,396.2 L124.0,397.2 L120.0,397.2"/>
<path d="M83.4,268.3 L82.7,272.3 L83.3,276.4 L82.6,280.5 L82.3,284.5 L79.5,287.1 L77.1,290.0 L74.8,293.0 L72.0,295.6 L69.5,298.4 L66.0,300.4 L62.3,302.1 L59.4,305.0 L55.6,306.5 L52.8,309.9 L50.5,313.7 L47.5,317.0 L47.5,321.1 L46.5,325.1 L46.6,329.1 L46.3,333.2 L47.1,337.0 L47.7,340.8 L48.3,344.6 L49.8,348.2 L45.2,350.0 L40.5,351.7 L36.4,352.7 L32.4,354.0 L30.1,360.0 L27.8,364.6 L25.5,369.3 L22.4,372.0 L19.1,374.5 L16.2,377.4 L12.3,375.1 L8.5,372.7 L4.6,370.4 L1.8,373.3 L-1.0,376.2"/>
<path d="M49.8,348.2 L52.2,351.6 L55.6,354.0 L57.3,357.8 L59.0,361.6 L61.4,365.0 L61.4,371.6 L63.5,374.9 L66.9,377.2 L69.1,380.4 L71.8,383.2 L73.1,387.2 L75.1,390.8 L77.9,394.1 L79.7,397.7 L81.1,401.7 L85.0,402.6 L89.0,403.0 L92.8,404.2 L96.7,404.9 L100.4,406.8 L104.3,407.5 L107.8,406.0 L111.1,404.3 L113.8,401.5 L117.4,400.3 L120.5,398.2 L124.2,397.4 L127.6,395.7 L131.6,395.8 L135.3,394.9 L138.6,392.9 L142.5,392.9 L146.0,391.3 L149.4,390.5 L152.9,390.1"/>
<path d="M147.2,392.1 L146.4,395.5 L144.8,398.7 L144.2,402.2 L144.3,405.8 L143.0,409.1 L142.1,412.5 L141.1,415.9 L140.3,419.4 L139.5,422.8 L138.3,426.2 L137.0,429.5 L135.9,433.1 L136.2,436.9 L134.7,440.4 L134.2,444.1 L134.1,447.9 L132.9,451.4 L131.9,455.0 L131.9,460.1 L136.1,462.0 L140.4,463.5 L144.9,463.2 L149.4,462.2 L154.0,462.6 L155.7,465.2 L152.6,467.7 L150.3,470.9 L147.5,473.7 L145.5,477.1 L143.7,478.2 L143.5,481.9 L142.5,485.3 L142.0,488.9 L140.2,492.2 L140.1,495.9 L139.6,499.5 L138.4,503.0 L136.9,506.3 L136.7,510.0 L138.1,505.1 L138.6,500.0"/>
<path d="M160.8,379.3 L161.7,382.9 L162.5,386.6 L162.5,390.4 L165.6,392.7 L169.3,393.8 L173.6,392.2 L177.8,390.4 L181.4,387.2 L184.6,383.6 L189.7,381.9 L193.5,384.3 L196.9,387.1 L199.9,390.4 L200.2,395.0 L201.1,399.5 L201.6,404.0 L205.6,404.2 L209.1,406.3 L213.0,406.7 L216.9,407.4 L219.8,404.3 L222.0,400.6 L225.0,397.7 L229.1,396.3 L231.8,392.9 L235.9,391.5 L239.0,388.7 L242.5,387.2 L246.0,385.5 L249.6,384.3 L253.3,385.8 L256.9,387.8 L261.0,388.3 L264.6,390.1"/>
<path d="M216.9,407.4 L216.6,410.9 L215.2,414.2 L213.9,417.8 L213.0,421.5 L211.3,424.9 L212.7,428.2 L213.5,431.7 L214.6,435.2 L214.8,438.8 L218.7,441.5 L222.0,444.8 L225.5,446.2 L228.7,448.1 L231.7,450.2 L234.0,453.0 L237.2,454.8 L239.8,457.4 L242.6,459.7 L241.5,463.7 L239.7,467.5 L238.0,471.3 L239.4,474.9 L239.7,478.7 L240.8,482.3 L240.4,486.2 L241.4,489.9 L240.7,494.9 L240.2,500.0 L238.8,503.5 L236.7,506.5 L234.3,509.4 L233.6,513.3 L230.9,516.0 L229.6,519.5 L227.7,522.7 L227.5,526.2 L226.7,529.7 L227.1,533.3 L226.7,536.8 L226.2,540.3 L225.5,543.9 L226.2,547.4 L225.2,550.9 L225.5,554.5"/>
<path d="M147.2,420.1 L151.8,420.1 L156.3,419.8 L160.8,419.3 L161.1,415.4 L161.6,411.6 L165.0,412.5 L167.6,417.6 L174.4,417.6 L175.6,414.1 L176.6,410.5 L178.6,407.4 L182.2,408.1 L185.4,409.9 L185.5,414.3 L183.9,418.4 L183.7,422.7 L184.7,426.4 L185.6,430.1 L186.4,433.8 L185.9,437.8 L187.1,441.4 L191.0,442.2 L195.0,442.2 L199.0,442.2 L199.6,445.9 L200.0,449.6 L199.9,453.3 L196.6,454.7 L193.1,455.6 L189.7,456.7 L186.8,454.5 L184.6,451.6"/>
<path d="M145.5,421.0 L145.2,424.8 L145.0,428.7 L143.5,432.4 L143.8,436.3 L144.0,440.7 L145.4,444.8 L146.7,449.0 L147.2,453.3 L147.2,458.4 L150.9,460.7 L155.2,461.5 L159.1,463.5 L163.0,463.1 L166.9,462.4 L170.8,462.8 L174.7,462.7 L178.6,462.6 L178.6,456.7"/>
<path d="M335.4,429.6 L333.1,426.7 L330.4,424.1 L328.4,420.9 L325.5,418.5 L323.5,415.3 L321.0,412.6 L319.0,409.4 L316.8,406.4 L313.1,406.8 L309.4,406.5 L305.8,405.8 L302.1,405.6 L298.5,404.8 L294.8,404.6 L291.2,404.0 L287.5,403.8 L283.8,403.5 L280.2,402.9 L276.5,403.4 L272.8,402.9 L269.1,400.2 L265.8,397.1 L265.9,393.5 L264.6,390.1"/>
<path d="M335.4,431.9 L332.0,433.2 L328.4,433.1 L324.9,434.0 L321.6,435.6 L317.9,435.2 L314.5,436.5 L313.2,440.3 L312.8,444.2 L312.2,448.1 L311.2,451.8 L310.3,455.5 L310.6,459.4 L309.4,463.0 L308.7,466.7 L308.5,470.3 L307.9,474.0 L307.7,477.6 L307.5,481.2 L307.7,484.9 L307.1,488.5 L307.5,492.2 L303.9,495.5 L300.6,499.1 L299.9,502.7 L300.2,506.4 L299.4,510.0 L302.2,513.1 L303.9,517.0 L303.1,520.8 L301.4,524.3 L300.5,528.0 L298.1,531.2 L297.2,535.0 L295.9,538.6 L300.5,543.2"/>
<path d="M0.0,441.1 L3.4,442.4 L6.9,443.6 L10.3,444.8 L13.9,445.7 L18.6,448.0 L23.2,450.4 L25.1,453.6 L25.5,457.3 L22.0,462.0 L18.3,463.9 L14.9,466.3 L11.6,468.9 L8.4,471.8 L5.3,474.7 L2.0,477.4 L-1.0,480.5"/>
<path d="M22.0,462.0 L22.9,465.7 L22.1,469.4 L23.1,473.1 L23.6,476.8 L23.2,480.5 L23.1,484.2 L21.9,487.9 L22.3,491.7 L21.0,495.3 L20.9,499.0 L21.1,503.1 L22.7,506.8 L27.3,510.2 L27.1,513.8 L27.1,517.4 L26.7,521.0 L26.2,524.6 L25.9,528.2 L26.1,531.8 L22.9,533.9 L19.7,536.2 L17.1,539.1 L13.6,540.9 L10.4,543.1 L7.0,544.6 L3.2,545.7 L0.0,547.7 L4.5,552.3 L4.1,556.9 L2.9,561.4 L2.3,565.9 L4.1,570.3 L4.5,575.0 L5.9,578.3 L6.4,581.8 L6.5,585.3 L7.3,588.7 L8.1,592.1 L9.1,595.5 L8.2,599.0 L6.8,602.3 L5.7,605.7 L4.5,609.1 L0.0,611.0"/>
<path d="M143.7,478.2 L147.4,477.7 L151.0,476.7 L154.9,477.3 L158.4,475.8 L162.2,475.8 L165.6,477.1 L169.0,477.6 L172.7,476.9 L176.1,478.2 L178.5,481.1 L180.4,484.3 L182.5,487.3 L185.4,489.8 L186.7,493.2 L188.2,496.5 L189.1,500.0 L191.7,503.2 L193.1,507.2 L195.9,510.2 L195.5,513.7 L194.2,517.0 L194.0,520.6 L192.6,523.8 L191.2,527.1 L191.6,530.8 L190.2,534.1 L191.2,537.5 L193.1,540.6 L194.1,544.1 L195.8,547.2 L197.9,550.1 L198.5,553.8 L200.5,556.8"/>
<path d="M27.3,510.2 L31.8,510.9 L36.5,511.0 L40.9,512.5 L43.8,516.1 L45.5,520.5 L50.0,521.2 L54.6,521.9 L59.1,522.7 L62.4,521.4 L65.8,520.2 L69.3,519.5 L72.7,518.5 L76.3,518.3 L79.4,516.1 L83.1,516.1 L86.4,514.8 L90.5,515.5 L94.6,514.7 L98.6,516.1 L102.7,516.0 L106.8,515.9 L110.0,517.8 L113.7,518.3 L117.1,519.7 L120.5,521.1 L123.6,523.3 L127.3,523.9 L131.9,523.4 L136.4,522.7 L136.6,518.9 L137.0,515.1 L137.2,511.3 L137.2,507.5 L137.6,503.7 L138.6,500.0"/>
<path d="M87.5,515.9 L87.0,520.5 L87.5,525.0 L91.8,525.8 L95.7,527.9 L100.0,528.4 L103.7,532.2 L106.8,536.4 L108.7,540.0 L109.9,543.9 L111.4,547.7 L111.1,551.6 L110.1,555.3 L109.1,559.1 L112.7,559.5 L116.3,559.0 L119.9,558.6 L123.4,558.0 L127.0,558.1 L130.6,557.8 L134.1,556.8 L135.7,560.8 L137.2,564.9 L139.8,568.5 L140.9,572.7 L139.4,576.0 L138.7,579.6 L137.2,582.9 L136.4,586.4 L135.7,590.5 L135.8,594.6 L135.7,598.7 L133.9,602.6 L134.1,606.8 L136.1,610.6 L137.0,614.7 L138.6,618.6 L139.8,622.7"/>
</g>
<!-- circles -->
<g font-family="Liberation Sans" fill="#fff" text-anchor="middle" font-style="italic" font-weight="bold">
<circle cx="114.5" cy="330.8" r="11.3" fill="#ff0000"/><circle cx="114.5" cy="330.8" r="11.3" fill="url(#sh)"/><text x="115.1" y="335.8" font-size="14" textLength="6.4" lengthAdjust="spacingAndGlyphs">3</text>
<circle cx="240.3" cy="337.2" r="11.3" fill="#ff0000"/><circle cx="240.3" cy="337.2" r="11.3" fill="url(#sh)"/><text x="240.9" y="342.2" font-size="14" textLength="6.4" lengthAdjust="spacingAndGlyphs">3</text>
<circle cx="349.3" cy="371.6" r="12.5" fill="#ff0000"/><circle cx="349.3" cy="371.6" r="12.5" fill="url(#sh)"/><text x="349.9" y="376.6" font-size="14" textLength="6.4" lengthAdjust="spacingAndGlyphs">4</text>
<circle cx="167.8" cy="438.3" r="19" fill="#ff0000"/><circle cx="167.8" cy="438.3" r="19" fill="url(#sh)"/><text x="168.4" y="443.3" font-size="14.5" textLength="6.4" lengthAdjust="spacingAndGlyphs">9</text>
<circle cx="69.8" cy="576.3" r="9.6" fill="#ff0000"/><circle cx="69.8" cy="576.3" r="9.6" fill="url(#sh)"/><text x="70.4" y="581.3" font-size="14" textLength="6.4" lengthAdjust="spacingAndGlyphs">2</text>
<circle cx="75.5" cy="624.5" r="13" fill="#ff0000"/><circle cx="75.5" cy="624.5" r="13" fill="url(#sh)"/><text x="76.1" y="629.5" font-size="14" textLength="6.4" lengthAdjust="spacingAndGlyphs">4</text>
</g>
<!-- labels with halo -->
<g font-family="Liberation Sans" font-size="13" fill="#161616" stroke="#ececec" stroke-width="2.6" paint-order="stroke" stroke-linejoin="round" stroke-opacity="0.85">
<text x="124.4" y="120.5" textLength="65.3" lengthAdjust="spacingAndGlyphs">Preah Vihear</text>
<text x="0" y="134" textLength="25" lengthAdjust="spacingAndGlyphs">Reap</text>
<text x="9.3" y="345" textLength="98.4" lengthAdjust="spacingAndGlyphs">Kampong Chhnang</text>
<text x="152" y="350.7" textLength="82" lengthAdjust="spacingAndGlyphs">Kampong Cham</text>
<text x="236.8" y="380.4" textLength="82.2" lengthAdjust="spacingAndGlyphs">Tboung Khmum</text>
<text x="96" y="452" textLength="66" lengthAdjust="spacingAndGlyphs">Phnom Penh</text>
<text x="22.3" y="589.8" textLength="40.9" lengthAdjust="spacingAndGlyphs">Kampot</text>
<text x="50" y="638.6" textLength="18.2" lengthAdjust="spacingAndGlyphs">Kep</text>
</g>
<g font-family="Liberation Sans" font-size="13" fill="#161616" stroke="#161616" stroke-width="0.1">
<text x="124.4" y="120.5" textLength="65.3" lengthAdjust="spacingAndGlyphs">Preah Vihear</text>
<text x="0" y="134" textLength="25" lengthAdjust="spacingAndGlyphs">Reap</text>
<text x="9.3" y="345" textLength="98.4" lengthAdjust="spacingAndGlyphs">Kampong Chhnang</text>
<text x="152" y="350.7" textLength="82" lengthAdjust="spacingAndGlyphs">Kampong Cham</text>
<text x="236.8" y="380.4" textLength="82.2" lengthAdjust="spacingAndGlyphs">Tboung Khmum</text>
<text x="96" y="452" textLength="66" lengthAdjust="spacingAndGlyphs">Phnom Penh</text>
<text x="22.3" y="589.8" textLength="40.9" lengthAdjust="spacingAndGlyphs">Kampot</text>
<text x="50" y="638.6" textLength="18.2" lengthAdjust="spacingAndGlyphs">Kep</text>
</g>
<!-- top band -->
<rect x="0" y="73" width="372" height="32.4" fill="#3c3c3c" fill-opacity="0.53"/>
<rect x="0" y="73" width="372" height="1" fill="#4a4a4a"/>
<circle cx="20.2" cy="88.7" r="9.1" fill="#a00000"/><text x="20.6" y="93.8" font-size="14.5" fill="#d8d8d8" text-anchor="middle" font-family="Liberation Sans" font-style="italic" textLength="6.5" lengthAdjust="spacingAndGlyphs">2</text>
<text x="-1.5" y="95.5" font-size="20" fill="#111" font-family="Liberation Sans" textLength="13.2" lengthAdjust="spacingAndGlyphs">ia</text>
</svg></div>
<div class="abs" style="left:372px;top:73px;width:1px;height:574px;background:#5c5c5c"></div>

<!-- panel -->

<div class="lbl" style="left:595px;top:75px;line-height:18px;">Layer Styling</div>
<svg class="abs" style="left:909px;top:75px" width="12" height="12" viewBox="0 0 12 12"><rect x="0.5" y="0.5" width="11" height="11" rx="2" fill="none" stroke="#555" stroke-width="1"/><path d="M3,3 L9,9 M9,3 L3,9" stroke="#2a2a2a" stroke-width="1.6"/></svg>

<div class="dd" style="left:382px;top:94px;width:538px;height:25px;padding-left:26px">cases<span class="arr"></span></div>
<svg class="abs" style="left:386px;top:100px" width="16" height="12" viewBox="0 0 16 12"><path d="M1,2 Q3,0 6,1.5 Q9,2.5 12,0.5 Q15,0 15.5,3 Q15,6 15.5,9 Q14,11.5 11,10 Q8,8.5 5,10 Q2,11.5 1,9 Q0.5,5.5 1,2 Z" fill="#e8e8e8"/></svg>
<div class="abs" style="left:382px;top:125px;width:38px;height:522px;background:#393939"></div>
<div class="abs" style="left:383px;top:126px;width:36px;height:32px;background:#2b2b2b"></div>
<div class="abs" style="left:384px;top:127px;width:34px;height:30px;background:#efefef"></div>
<div class="dd" style="left:423px;top:125px;width:497px;height:25px;padding-left:25px">Single symbol<span class="arr"></span></div>
<svg class="abs" style="left:429px;top:130px" width="14" height="14" viewBox="0 0 14 14"><rect x="0.5" y="0.5" width="10" height="3" fill="#00c040" stroke="#00661f" stroke-width="0.6"/><rect x="2.5" y="5.5" width="10" height="3" fill="#00c040" stroke="#00661f" stroke-width="0.6"/><rect x="0.5" y="10.5" width="10" height="3" fill="#00c040" stroke="#00661f" stroke-width="0.6"/></svg>

<!-- tab icons -->
<svg class="abs" style="left:387px;top:128px" width="28" height="28" viewBox="0 0 26 26">
<path d="M3,16 L9,7 L17,11 L11,20 Z" fill="#f5e27a"/><path d="M2,16 L7,9 L13,12 L8,19 Z" fill="#8fb3e0"/><path d="M2,17 L5,12 L12,16 L9,21 Z" fill="#e86060"/>
<path d="M18,4 L21,6 L15,14 L12,12 Z" fill="#d9b278" stroke="#a07840" stroke-width="0.6"/><path d="M9,12 L15,14 L13,21 L7,19 Z" fill="#e7c48f" stroke="#b08850" stroke-width="0.6"/></svg>
<svg class="abs" style="left:387px;top:164px" width="26" height="16" viewBox="0 0 26 16"><path d="M1,8 L6,2 L24,2 L24,14 L6,14 Z" fill="#f2cc2f" stroke="#8a6d00" stroke-width="1"/><text x="15" y="12" font-family="Liberation Sans" font-size="9" font-weight="bold" fill="#222" text-anchor="middle">abc</text></svg>
<svg class="abs" style="left:386px;top:192px" width="28" height="18" viewBox="0 0 28 18"><text x="14" y="13.5" font-family="Liberation Sans" font-size="12" font-weight="bold" fill="#2b2b2b" text-anchor="middle" stroke="#f4f4f4" stroke-width="3" paint-order="stroke" stroke-linejoin="round" textLength="20" lengthAdjust="spacingAndGlyphs">abc</text></svg>
<svg class="abs" style="left:389px;top:220px" width="22" height="24" viewBox="0 0 22 24"><path d="M11,1 L21,6 L11,11 L1,6 Z" fill="#e85a5a" stroke="#8a2020" stroke-width="0.7"/><path d="M1,6 L11,11 L11,23 L1,18 Z" fill="#8ed14a" stroke="#3f7a10" stroke-width="0.7"/><path d="M21,6 L11,11 L11,23 L21,18 Z" fill="#f2d84a" stroke="#8a7a10" stroke-width="0.7"/></svg>
<svg class="abs" style="left:388px;top:250px" width="24" height="26" viewBox="0 0 24 26"><rect x="7" y="1" width="10" height="8" fill="#ee6d6d" stroke="#a03030" stroke-width="0.6"/><path d="M12,9 L12,14 M5,14 L19,14 M5,14 L5,18 M12,14 L12,18 M19,14 L19,18" stroke="#c79a45" stroke-width="2"/><rect x="1" y="17" width="9" height="7" fill="#f5df55" stroke="#9a8010" stroke-width="0.6"/><rect x="14" y="17" width="9" height="7" fill="#8cc0ee" stroke="#3070a0" stroke-width="0.6"/></svg>
<svg class="abs" style="left:389px;top:281px" width="22" height="24" viewBox="0 0 22 24"><path d="M3,13 Q3,5 11,5 L11,2 L16,7 L11,12 L11,9 Q7,9 7,13 Z" fill="#6cb36c"/><path d="M19,11 Q19,20 11,20 L11,23 L6,18 L11,13 L11,16 Q15,16 15,11 Z" fill="#f08a3a"/></svg>

<!-- preview A -->
<div class="abs" style="left:466px;top:212px;width:32px;height:28px;border-radius:50%;background:radial-gradient(closest-side,rgba(50,50,50,0.18),rgba(50,50,50,0))"></div>
<svg class="abs" style="left:476px;top:218px" width="12" height="14" viewBox="0 0 12 14"><text x="6" y="12" font-family="Liberation Sans" font-size="13" font-weight="bold" font-style="italic" fill="#fff" text-anchor="middle" textLength="8" lengthAdjust="spacingAndGlyphs">A</text></svg>

<!-- tree -->
<div class="abs" style="left:548px;top:164px;width:300px;height:119px;background:#afafaf;border:1px solid #3a3a3a;border-radius:3px"></div>
<div class="abs" style="left:549px;top:223px;width:296px;height:19px;background:#ededed"></div>
<svg class="abs" style="left:549px;top:165px" width="298" height="117" viewBox="549 165 298 117">
<g fill="#6a6a6a"><path d="M557,172 L564,172 L560.5,178 Z"/><path d="M577,191.5 L584,191.5 L580.5,197.5 Z"/><path d="M597,210.5 L604,210.5 L600.5,216.5 Z"/></g>
<rect x="573" y="169.5" width="16" height="13" fill="#b7b7b7"/>
<rect x="593" y="188.5" width="16" height="13" fill="#b0b0b0"/>
<rect x="613" y="207.5" width="16" height="13" fill="#b0b0b0"/>
<circle cx="620" cy="213.5" r="5.2" fill="#e01010"/>
<rect x="633" y="226.5" width="16" height="13" fill="#e2e2e2"/>
<g font-family="Liberation Sans" font-size="13" font-weight="bold" font-style="italic" fill="#fff" text-anchor="middle">
<text x="581" y="181.5" textLength="7" lengthAdjust="spacingAndGlyphs">A</text>
<text x="601" y="200.5" textLength="7" lengthAdjust="spacingAndGlyphs">A</text>
<text x="621" y="219.5" textLength="7" lengthAdjust="spacingAndGlyphs">A</text>
<text x="641" y="238.5" textLength="7" lengthAdjust="spacingAndGlyphs">A</text>
</g>
<g font-family="Liberation Sans" font-size="15" fill="#141414">
<text x="595" y="180.7" font-weight="bold">Fill</text>
<text x="615.4" y="199.5">Centroid fill</text>
<text x="635.5" y="218.5" font-weight="bold">Marker</text>
<text x="655.5" y="237.5">Font marker</text>
<text x="655.5" y="256.5">Simple marker</text>
</g>
</svg>

<!-- buttons -->
<div class="btn" style="left:855px;top:157px;width:29px;height:25px"></div>
<div class="btn" style="left:890px;top:157px;width:29px;height:25px;background:#6c6c6c"></div>
<div class="btn" style="left:855px;top:187px;width:29px;height:25px"></div>
<div class="btn" style="left:890px;top:187px;width:29px;height:25px"></div>
<div class="btn" style="left:855px;top:217px;width:29px;height:25px"></div>
<div class="btn" style="left:890px;top:217px;width:29px;height:25px"></div>
<svg class="abs" style="left:855px;top:157px" width="65" height="85" viewBox="855 157 65 85">
<path d="M866.5,162.5 h4 v4 h4 v4 h-4 v4 h-4 v-4 h-4 v-4 h4 Z" fill="#fff" stroke="#3d8a3d" stroke-width="1.3"/>
<path d="M899,172 L905,164 L911,172 Z" fill="#5f6468"/>
<rect x="862.5" y="196.5" width="13" height="5" fill="#fff" stroke="#e03a3a" stroke-width="1.3"/>
<path d="M898.5,193.5 L911.5,193.5 L905,204 Z" fill="#6f9fd8" stroke="#40689a" stroke-width="0.8"/>
<rect x="862" y="223" width="9" height="11" fill="#d8d8d0" stroke="#777" stroke-width="0.6"/>
<rect x="865" y="221" width="9" height="11" fill="#f0f0f0" stroke="#888" stroke-width="0.5"/>
<rect x="869.5" y="229" width="5" height="5" rx="1" fill="#f0d060" stroke="#a08010" stroke-width="0.6"/>
<path d="M902,226 L902,222.5 Q905,219 908,222.5" fill="none" stroke="#ddd" stroke-width="1.5"/>
<rect x="899" y="226" width="11" height="8" rx="1" fill="#f2d322" stroke="#a08a10" stroke-width="0.7"/>
</svg>
<div class="lbl" style="left:424px;top:313px">Symbol layer type</div>
<div class="dd" style="left:545px;top:308px;width:356px;height:25px;padding-left:3px">Font marker<span class="arr"></span></div>
<div class="abs" style="left:911px;top:307px;width:9px;height:345px;border:1px solid #4a4a4a;border-radius:1px"></div>

<div class="lbl" style="left:433px;top:350px">Font family</div>
<div class="dd" style="left:534px;top:345px;width:316px;height:25px">Fira Sans Compressed Medium<span class="arr"></span></div>
<div class="lbl" style="left:433px;top:381px">Font style</div>
<div class="dd" style="left:534px;top:376px;width:316px;height:25px;padding-left:3px">Italic<span class="arr"></span></div>
<div class="lbl" style="left:433px;top:413px">Size</div>
<div class="dd" style="left:534px;top:407px;width:167px;height:25px">3.800000</div><svg class="abs" style="left:690px;top:407px" width="6" height="25" viewBox="0 0 6 25"><path d="M0.8,10.0 L5.2,10.0 L3,6.0 Z M0.8,15.5 L5.2,15.5 L3,19.5 Z" fill="#c8c8c8"/></svg>
<div class="dd" style="left:707px;top:407px;width:143px;height:25px;padding-left:3px">Millimeters<span class="arr"></span></div>
<svg class="abs" style="left:865px;top:411px" width="26" height="18" viewBox="0 0 26 18"><path d="M0.5,8.5 L5,3.5 L5,13.5 Z" fill="#a8aab0"/><rect x="5" y="1.5" width="12" height="7" fill="#e6e6e6" stroke="#bcbcbc" stroke-width="0.6"/><rect x="5" y="8.5" width="12" height="7.5" fill="#e6e6e6" stroke="#bcbcbc" stroke-width="0.6"/><rect x="7" y="4" width="8" height="1.6" fill="#444"/><rect x="7" y="11.5" width="8" height="1.3" fill="#444"/><path d="M16.5,12 L22.5,12 L19.5,15.5 Z" fill="#2a2a2a"/></svg>
<div class="lbl" style="left:433px;top:446px">Fill color</div>
<div class="dd" style="left:534px;top:439px;width:316px;height:28px;background:linear-gradient(#4a4a4a,#3e3e3e)"><div class="abs" style="left:3px;top:6px;width:296px;height:15px;background:#fff;border-radius:3px"></div><span class="arr" style="right:4px"></span></div>
<svg class="abs" style="left:865px;top:444px" width="26" height="18" viewBox="0 0 26 18"><path d="M0.5,8.5 L5,3.5 L5,13.5 Z" fill="#a8aab0"/><rect x="5" y="1.5" width="12" height="7" fill="#e6e6e6" stroke="#bcbcbc" stroke-width="0.6"/><rect x="5" y="8.5" width="12" height="7.5" fill="#e6e6e6" stroke="#bcbcbc" stroke-width="0.6"/><rect x="7" y="4" width="8" height="1.6" fill="#444"/><rect x="7" y="11.5" width="8" height="1.3" fill="#444"/><path d="M16.5,12 L22.5,12 L19.5,15.5 Z" fill="#2a2a2a"/></svg>
<div class="lbl" style="left:433px;top:480px">Stroke color</div>
<div class="dd" style="left:534px;top:473px;width:316px;height:28px;background:linear-gradient(#4a4a4a,#3e3e3e)"><div class="abs" style="left:3px;top:6px;width:296px;height:15px;background:#232323;border-radius:3px"></div><span class="arr" style="right:4px"></span></div>
<svg class="abs" style="left:865px;top:478px" width="26" height="18" viewBox="0 0 26 18"><path d="M0.5,8.5 L5,3.5 L5,13.5 Z" fill="#a8aab0"/><rect x="5" y="1.5" width="12" height="7" fill="#e6e6e6" stroke="#bcbcbc" stroke-width="0.6"/><rect x="5" y="8.5" width="12" height="7.5" fill="#e6e6e6" stroke="#bcbcbc" stroke-width="0.6"/><rect x="7" y="4" width="8" height="1.6" fill="#444"/><rect x="7" y="11.5" width="8" height="1.3" fill="#444"/><path d="M16.5,12 L22.5,12 L19.5,15.5 Z" fill="#2a2a2a"/></svg>
<div class="lbl" style="left:433px;top:513px">Stroke width</div>
<div class="dd" style="left:534px;top:507px;width:167px;height:25px;padding-left:4px">No stroke</div><svg class="abs" style="left:690px;top:507px" width="6" height="25" viewBox="0 0 6 25"><path d="M0.8,10.0 L5.2,10.0 L3,6.0 Z M0.8,15.5 L5.2,15.5 L3,19.5 Z" fill="#c8c8c8"/></svg>
<div class="dd" style="left:707px;top:507px;width:143px;height:25px;padding-left:3px">Millimeters<span class="arr"></span></div>
<svg class="abs" style="left:865px;top:511px" width="26" height="18" viewBox="0 0 26 18"><path d="M0.5,8.5 L5,3.5 L5,13.5 Z" fill="#a8aab0"/><rect x="5" y="1.5" width="12" height="7" fill="#e6e6e6" stroke="#bcbcbc" stroke-width="0.6"/><rect x="5" y="8.5" width="12" height="7.5" fill="#e6e6e6" stroke="#bcbcbc" stroke-width="0.6"/><rect x="7" y="4" width="8" height="1.6" fill="#444"/><rect x="7" y="11.5" width="8" height="1.3" fill="#444"/><path d="M16.5,12 L22.5,12 L19.5,15.5 Z" fill="#2a2a2a"/></svg>
<div class="lbl" style="left:433px;top:545px">Join style</div>
<div class="dd" style="left:534px;top:539px;width:316px;height:25px;padding-left:26px">Bevel<span class="arr"></span></div>
<svg class="abs" style="left:537px;top:545px" width="16" height="15" viewBox="0 0 16 15"><path d="M0.5,0.5 L10,0.5 L14.5,4.5 L14.5,14.5 L8.5,14.5 L8.5,7.5 L0.5,7.5 Z" fill="#3d6eb5" stroke="#16284a" stroke-width="1"/><g fill="#f2dd3a"><rect x="2.5" y="2.5" width="1.6" height="1.6"/><rect x="6" y="2.5" width="1.6" height="1.6"/><rect x="9.5" y="3" width="1.6" height="1.6"/><rect x="11" y="6.5" width="1.6" height="1.6"/><rect x="11" y="9.5" width="1.6" height="1.6"/><rect x="11" y="12.2" width="1.6" height="1.6"/></g></svg>
<svg class="abs" style="left:865px;top:543px" width="26" height="18" viewBox="0 0 26 18"><path d="M0.5,8.5 L5,3.5 L5,13.5 Z" fill="#a8aab0"/><rect x="5" y="1.5" width="12" height="7" fill="#e6e6e6" stroke="#bcbcbc" stroke-width="0.6"/><rect x="5" y="8.5" width="12" height="7.5" fill="#e6e6e6" stroke="#bcbcbc" stroke-width="0.6"/><rect x="7" y="4" width="8" height="1.6" fill="#444"/><rect x="7" y="11.5" width="8" height="1.3" fill="#444"/><path d="M16.5,12 L22.5,12 L19.5,15.5 Z" fill="#2a2a2a"/></svg>
<div class="lbl" style="left:433px;top:577px">Rotation</div>
<div class="dd" style="left:534px;top:571px;width:316px;height:25px">0.00 °</div><svg class="abs" style="left:840px;top:571px" width="6" height="25" viewBox="0 0 6 25"><path d="M0.8,10.0 L5.2,10.0 L3,6.0 Z M0.8,15.5 L5.2,15.5 L3,19.5 Z" fill="#c8c8c8"/></svg>
<svg class="abs" style="left:865px;top:575px" width="26" height="18" viewBox="0 0 26 18"><path d="M0.5,8.5 L5,3.5 L5,13.5 Z" fill="#a8aab0"/><rect x="5" y="1.5" width="12" height="7" fill="#e6e6e6" stroke="#bcbcbc" stroke-width="0.6"/><rect x="5" y="8.5" width="12" height="7.5" fill="#e6e6e6" stroke="#bcbcbc" stroke-width="0.6"/><rect x="7" y="4" width="8" height="1.6" fill="#444"/><rect x="7" y="11.5" width="8" height="1.3" fill="#444"/><path d="M16.5,12 L22.5,12 L19.5,15.5 Z" fill="#2a2a2a"/></svg>
<div class="lbl" style="left:433px;top:624px">Offset</div>
<div class="lbl" style="left:534px;top:608px">x</div>
<div class="dd" style="left:549px;top:603px;width:152px;height:25px">0.000000</div><svg class="abs" style="left:690px;top:603px" width="6" height="25" viewBox="0 0 6 25"><path d="M0.8,10.0 L5.2,10.0 L3,6.0 Z M0.8,15.5 L5.2,15.5 L3,19.5 Z" fill="#c8c8c8"/></svg>
<div class="lbl" style="left:534px;top:639px">y</div>
<div class="dd" style="left:549px;top:634px;width:152px;height:25px">0.400000</div><svg class="abs" style="left:690px;top:634px" width="6" height="25" viewBox="0 0 6 25"><path d="M0.8,10.0 L5.2,10.0 L3,6.0 Z M0.8,15.5 L5.2,15.5 L3,19.5 Z" fill="#c8c8c8"/></svg>
<svg class="abs" style="left:662px;top:640px" width="16" height="8" viewBox="0 0 16 8"><path d="M0,7 L5,0.5 L15,0.5 L15,8 L0,8 Z" fill="#9a9a9a"/><path d="M7,2 L11,6 M11,2 L7,6" stroke="#eee" stroke-width="1.3"/></svg>
<div class="dd" style="left:707px;top:618px;width:143px;height:25px;padding-left:3px">Millimeters<span class="arr"></span></div>
<svg class="abs" style="left:865px;top:622px" width="26" height="18" viewBox="0 0 26 18"><path d="M0.5,8.5 L5,3.5 L5,13.5 Z" fill="#a8aab0"/><rect x="5" y="1.5" width="12" height="7" fill="#e6e6e6" stroke="#bcbcbc" stroke-width="0.6"/><rect x="5" y="8.5" width="12" height="7.5" fill="#e6e6e6" stroke="#bcbcbc" stroke-width="0.6"/><rect x="7" y="4" width="8" height="1.6" fill="#444"/><rect x="7" y="11.5" width="8" height="1.3" fill="#444"/><path d="M16.5,12 L22.5,12 L19.5,15.5 Z" fill="#2a2a2a"/></svg>
</body></html>
